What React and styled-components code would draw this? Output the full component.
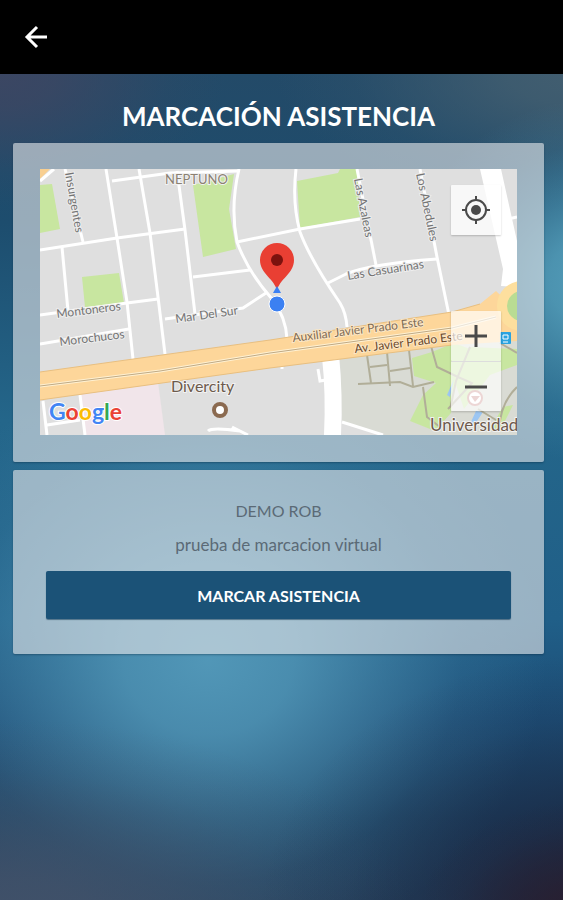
import React from 'react';
import styled, { createGlobalStyle } from 'styled-components';

const GlobalStyle = createGlobalStyle`
  * {
    box-sizing: border-box;
  }
  body {
    margin: 0;
    background: #000000;
    font-family: Lato, "Liberation Sans", sans-serif;
  }
`;

const Page = styled.div`
  display: flex;
  flex-direction: column;
  min-height: 100vh;
`;

const TopBar = styled.header`
  display: flex;
  align-items: center;
  height: 74px;
  padding: 0 20px;
  background: #000000;
`;

const BackButton = styled.button`
  display: flex;
  padding: 0;
  border: none;
  background: none;
  color: #ffffff;
  cursor: pointer;
`;

// soft light spot: fades out in several steps so no edge shows
const glow = (size, at, rgb, strength = 1) => `
  radial-gradient(
    ellipse ${size} at ${at},
    rgba(${rgb}, ${strength}) 0%,
    rgba(${rgb}, ${strength * 0.85}) 25%,
    rgba(${rgb}, ${strength * 0.5}) 50%,
    rgba(${rgb}, ${strength * 0.16}) 75%,
    rgba(${rgb}, 0) 100%
  )
`;

const Content = styled.main`
  flex: 1;
  display: flex;
  flex-direction: column;
  gap: 8px;
  padding: 24px 19px 24px 13px;
  background:
    ${glow('30% 14%', '104% 102%', '42, 30, 46', 0.9)},
    ${glow('60% 32%', '106% 102%', '26, 36, 62', 0.9)},
    ${glow('75% 26%', '0% 104%', '66, 82, 106')},
    ${glow('60% 36%', '37% 71%', '84, 154, 186', 0.95)},
    ${glow('34% 22%', '106% 25%', '84, 158, 186')},
    ${glow('55% 16%', '104% 0%', '66, 94, 112')},
    ${glow('40% 16%', '0% 0%', '62, 70, 98', 0.9)},
    linear-gradient(
      180deg,
      #234a68 0%,
      #1d4d6e 18%,
      #24668a 42%,
      #205f88 66%,
      #1d4d76 78%,
      #1c4162 90%,
      #24405c 100%
    );
`;

const Title = styled.h1`
  margin: 0;
  padding-bottom: 1px;
  color: #ffffff;
  font-size: 26px;
  font-weight: 700;
  line-height: 36px;
  text-align: center;
`;

const Panel = styled.section`
  padding: ${({ $padding }) => $padding};
  border-radius: 2px;
  background: rgba(218, 222, 228, 0.65);
  box-shadow: 0 1px 2px rgba(0, 30, 50, 0.35);
`;

const MapFrame = styled.div`
  position: relative;
  overflow: hidden;
  background: #dedede;
`;

const MapDrawing = styled.svg`
  display: block;
  width: 100%;
  height: auto;
`;

const MapControls = styled.div`
  position: absolute;
  top: 16px;
  right: 16px;
  bottom: 24px;
  display: flex;
  flex-direction: column;
  justify-content: space-between;
`;

const ZoomGroup = styled.div`
  display: flex;
  flex-direction: column;
  box-shadow: 0 1px 2px rgba(0, 0, 0, 0.2);
`;

const MapButton = styled.button`
  display: flex;
  align-items: center;
  justify-content: center;
  width: 50px;
  height: 50px;
  padding: 0;
  border: none;
  border-radius: 1px;
  background: rgba(255, 255, 255, ${({ $solid }) => ($solid ? 0.78 : 0.68)});
  box-shadow: ${({ $solid }) => ($solid ? '0 1px 2px rgba(0, 0, 0, 0.2)' : 'none')};
  color: #4a4a4a;
  cursor: pointer;

  & + & {
    border-top: 1px solid #dddddd;
  }
`;

const Site = styled.h2`
  margin: 0 0 10px;
  color: #5b6a76;
  font-size: 16px;
  font-weight: 400;
  line-height: 24px;
  text-align: center;
`;

const Description = styled.p`
  margin: 0 0 14px;
  color: #5b6a76;
  font-size: 17px;
  line-height: 24px;
  text-align: center;
`;

const MarkButton = styled.button`
  display: block;
  width: 100%;
  height: 48px;
  border: none;
  border-radius: 2px;
  background: #1b5277;
  box-shadow: 0 1px 1px rgba(0, 40, 70, 0.5);
  color: #ffffff;
  font-family: inherit;
  font-size: 16px;
  font-weight: 700;
  cursor: pointer;
`;

const StreetLabel = styled.text`
  fill: ${({ $color }) => $color || '#737373'};
  stroke: ${({ $halo }) => $halo || '#ededed'};
  stroke-width: 2px;
  paint-order: stroke;
  font-size: 12px;
`;

const PlaceLabel = styled.text`
  fill: ${({ $color }) => $color || '#6d5a4c'};
  stroke: #f2f2f2;
  stroke-width: 2px;
  paint-order: stroke;
  font-size: ${({ $size }) => $size || 16}px;
`;

const GoogleText = styled.text`
  font-size: 23px;
  font-weight: 700;
  stroke: #ffffff;
  stroke-width: 2px;
  paint-order: stroke;
`;

const parks = [
  '0,16 12,15 20,60 0,64',
  '153,16 194,5 189,40 196,80 163,88',
  '42,108 79,104 84,134 45,138',
  '257,12 298,4 300,0 317,0 320,48 260,59',
  '372,189 392,183 414,174 430,180 415,215 411,244 395,262 370,252 383,226 396,214 374,207',
  '430,178 477,180 477,196 450,206 424,240 414,210',
  '463,238 473,236 460,262 450,260',
];

const streets = [
  'M25 0L43 73',
  'M0 81L77 69L145 60',
  'M66 0L77 69L87 133L93 190',
  'M99 0L110 64L118 128L125 185',
  'M72 12L130 4L199 2',
  'M137 2L145 61L155 145',
  'M199 0Q190 38 197 73Q208 103 232 130Q246 148 247 170',
  'M153 108L210 101',
  'M197 73L260 60L320 50',
  'M22 78L28 142',
  'M0 146L87 134L118 130',
  'M0 175L89 160',
  'M125 150L203 139L226 124',
  'M256 0Q252 34 260 63Q270 90 300 134Q306 144 307 158',
  'M317 0L336 96',
  'M380 0L397 88L409 146',
  'M288 114L306 105Q330 95 397 90',
  'M468 50L477 48',
  'M302 253L343 266',
  'M3 232L7 266M7 256L40 251M40 226L45 266',
  'M168 262Q172 258 200 262M192 258L208 266',
  'M278 200L280 212L286 211M242 196V200',
];

const paths = [
  'M318 215L360 213L373 218L394 213',
  'M327 186L331 214',
  'M347 183L350 217',
  'M369 181L373 217',
  'M330 198L347 196',
  'M350 202L370 199',
  'M391 177L397 198L418 208L432 214L408 240',
  'M383 218L387 248L400 258',
  'M460 174L477 184',
  'M477 218Q460 234 459 262',
  'M430 178L416 212L411 236',
  'M438 240L456 251',
];

function AttendanceMap() {
  return (
    <MapDrawing viewBox="0 0 477 266" role="img" aria-label="Mapa de ubicación">
      <rect width="477" height="266" fill="#dfdfdf" />
      <polygon points="300,190 477,165 477,266 345,266 302,252" fill="#d9dbd4" />
      {parks.map((points) => (
        <polygon key={points} points={points} fill="#c8e6a0" />
      ))}
      <polygon points="40,224 118,213 125,266 45,266" fill="#f1e5ea" />
      <path d="M414 210L407 226L410 228ZM436 242L443 243L435 255H430Z" fill="#9cc6f2" />
      <g fill="none" stroke="#ffffff" strokeWidth="3">
        {streets.map((d) => (
          <path key={d} d={d} />
        ))}
      </g>
      <g fill="none" stroke="#b1ae98" strokeWidth="2">
        {paths.map((d) => (
          <path key={d} d={d} />
        ))}
      </g>
      <polygon points="440,0 461,0 477,72 477,118 461,117 463,100" fill="#ffffff" />
      <path d="M282 188L299 186Q303 226 301 266H284Q286 225 282 188Z" fill="#ffffff" />
      <path d="M0 0H10L0 10Z" fill="#f8cf91" />
      <path d="M0 12L14 0" stroke="#ffffff" strokeWidth="3" />

      {/* Av. Javier Prado and the roundabout at its end */}
      <path d="M0 203L230 171L412 143L440 135L456 122L477 142V172L412 176L230 199L0 231Z" fill="#fdd69a" />
      <path d="M0 203L230 171L412 143L440 135M0 231L230 199L412 176" fill="none" stroke="#e8bf80" />
      <path d="M0 217L120 202L230 184L412 159L456 148" fill="none" stroke="#fff1d2" strokeWidth="3" />
      <path d="M0 217L120 202L230 184L412 159L456 148" fill="none" stroke="#bfa984" />
      <circle cx="482" cy="137" r="20" fill="#b9dc93" stroke="#fddf9e" strokeWidth="10" />

      <StreetLabel transform="translate(25 4) rotate(80)">Insurgentes</StreetLabel>
      <StreetLabel transform="translate(314 10) rotate(79)">Las Azaleas</StreetLabel>
      <StreetLabel transform="translate(376 5) rotate(78)">Los Abedules</StreetLabel>
      <StreetLabel transform="translate(308 111) rotate(-9)">Las Casuarinas</StreetLabel>
      <StreetLabel transform="translate(17 149) rotate(-7)">Montoneros</StreetLabel>
      <StreetLabel transform="translate(20 177) rotate(-7)">Morochucos</StreetLabel>
      <StreetLabel transform="translate(136 154) rotate(-8)">Mar Del Sur</StreetLabel>
      <StreetLabel transform="translate(253 173) rotate(-7)" $color="#806c55" $halo="#fbe6c6">
        Auxiliar Javier Prado Este
      </StreetLabel>
      <StreetLabel transform="translate(315 184) rotate(-7)" $color="#6b4a2c" $halo="#fbe6c6">
        Av. Javier Prado Este
      </StreetLabel>
      <PlaceLabel x="125" y="15" $size={13} $color="#8b8173">NEPTUNO</PlaceLabel>
      <PlaceLabel x="131" y="223">Divercity</PlaceLabel>
      <PlaceLabel x="390" y="262" $size={17}>Universidad</PlaceLabel>

      <circle cx="180" cy="241" r="6" fill="#ffffff" stroke="#8b6a50" strokeWidth="4" />
      <circle cx="435" cy="229" r="7" fill="#ffffff" stroke="#c5807c" strokeWidth="2" />
      <path d="M431 227H440L435 233Z" fill="#c5807c" />
      <rect x="460" y="163" width="11" height="12" rx="1" fill="#2ba3e0" />
      <path d="M463 166H468V170H463ZM463 173H468" fill="none" stroke="#ffffff" strokeWidth="1" />

      <circle cx="237" cy="135" r="8" fill="#3b80f2" stroke="#ffffff" strokeWidth="1" />
      <path
        d="M237 122C235 110 220 105 220 91A17 17 0 0 1 254 91C254 105 239 110 237 122Z"
        fill="#e93f33"
      />
      <circle cx="237" cy="91" r="6" fill="#7c120e" />
      <path d="M233 124L237 117L241 124Z" fill="#3b80f2" />

      <GoogleText x="9" y="251" aria-label="Google">
        <tspan fill="#4285f4">G</tspan>
        <tspan fill="#ea4335">o</tspan>
        <tspan fill="#fbbc05">o</tspan>
        <tspan fill="#4285f4">g</tspan>
        <tspan fill="#34a853">l</tspan>
        <tspan fill="#ea4335">e</tspan>
      </GoogleText>
    </MapDrawing>
  );
}

function App() {
  return (
    <>
      <GlobalStyle />
      <Page>
        <TopBar>
          <BackButton type="button" aria-label="Volver">
            <svg width="32" height="32" viewBox="0 0 32 32" fill="none" stroke="currentColor" strokeWidth="3">
              <path d="M27 16H8M17 6L7 16L17 26" />
            </svg>
          </BackButton>
        </TopBar>
        <Content>
          <Title>MARCACIÓN ASISTENCIA</Title>
          <Panel $padding="26px 27px 27px">
            <MapFrame>
              <AttendanceMap />
              <MapControls>
                <MapButton type="button" $solid aria-label="Mi ubicación">
                  <svg width="28" height="28" viewBox="0 0 28 28" fill="none" stroke="currentColor" strokeWidth="2">
                    <circle cx="14" cy="14" r="10" />
                    <circle cx="14" cy="14" r="5" fill="currentColor" stroke="none" />
                    <path d="M14 0V5M14 23V28M0 14H5M23 14H28" />
                  </svg>
                </MapButton>
                <ZoomGroup>
                  <MapButton type="button" aria-label="Acercar">
                    <svg width="24" height="24" viewBox="0 0 24 24" stroke="currentColor" strokeWidth="3">
                      <path d="M12 1V23M1 12H23" />
                    </svg>
                  </MapButton>
                  <MapButton type="button" aria-label="Alejar">
                    <svg width="24" height="24" viewBox="0 0 24 24" stroke="currentColor" strokeWidth="3">
                      <path d="M1 12H23" />
                    </svg>
                  </MapButton>
                </ZoomGroup>
              </MapControls>
            </MapFrame>
          </Panel>
          <Panel $padding="29px 33px 35px">
            <Site>DEMO ROB</Site>
            <Description>prueba de marcacion virtual</Description>
            <MarkButton type="button">MARCAR ASISTENCIA</MarkButton>
          </Panel>
        </Content>
      </Page>
    </>
  );
}

export default App;
